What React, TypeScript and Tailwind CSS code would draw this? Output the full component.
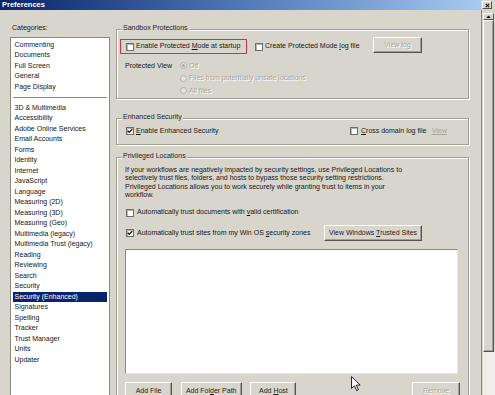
const categories = [
  "Commenting",
  "Documents",
  "Full Screen",
  "General",
  "Page Display",
  "-",
  "3D & Multimedia",
  "Accessibility",
  "Adobe Online Services",
  "Email Accounts",
  "Forms",
  "Identity",
  "Internet",
  "JavaScript",
  "Language",
  "Measuring (2D)",
  "Measuring (3D)",
  "Measuring (Geo)",
  "Multimedia (legacy)",
  "Multimedia Trust (legacy)",
  "Reading",
  "Reviewing",
  "Search",
  "Security",
  "Security (Enhanced)",
  "Signatures",
  "Spelling",
  "Tracker",
  "Trust Manager",
  "Units",
  "Updater",
];

const Check = ({ checked }: { checked?: boolean }) => (
  <span className="flex h-[8px] w-[8px] shrink-0 items-center justify-center border border-[#6f6d66] bg-white shadow-[inset_1px_1px_0_#b8b5ad]">
    {checked && (
      <svg viewBox="0 0 8 8" className="h-[6px] w-[6px]">
        <path d="M1 3.6 L3 5.8 L7 1.6" stroke="#111" strokeWidth="1.7" fill="none" />
      </svg>
    )}
  </span>
);

const Radio = ({ on }: { on?: boolean }) => (
  <span className="flex h-[7px] w-[7px] shrink-0 items-center justify-center rounded-full border border-[#b4b1a8] bg-[#e4e2dc]">
    {on && <span className="h-[3px] w-[3px] rounded-full bg-[#aeaba3]" />}
  </span>
);

const Btn = ({
  children,
  disabled,
  className,
}: {
  children: React.ReactNode;
  disabled?: boolean;
  className: string;
}) => (
  <div
    className={`flex shrink-0 items-center justify-center border border-t-white border-l-white border-r-[#55534e] border-b-[#55534e] bg-[#d8d5cd] shadow-[inset_-1px_-1px_0_#a19e96] ${
      disabled ? "text-[#aaa79f] [text-shadow:1px_1px_0_#fff]" : "text-[#1c1c1c]"
    } ${className}`}
  >
    <span className="whitespace-nowrap">{children}</span>
  </div>
);

const Legend = ({ children }: { children: React.ReactNode }) => (
  <legend className="ml-[2px] bg-[#d8d5cd] px-[1px] pb-[3px] leading-[9px] text-[#1c1c1c]">{children}</legend>
);

const fieldset =
  "w-[353px] border border-[#a19e95] px-[3px] shadow-[inset_1px_1px_0_#fff,1px_1px_0_#fff]";

export default function App() {
  return (
    <div className="relative h-[395px] w-[495px] overflow-hidden bg-[#d8d5cd] font-['Liberation_Sans',Arial,sans-serif] text-[7px] text-[#161616]">
      {/* title bar */}
      <div className="flex h-[10px]">
        <div className="flex flex-1 items-center bg-linear-to-r from-[#0a246a] via-[#4f78b8] to-[#a6caf0] pl-[2px] text-[7.5px] font-bold leading-none text-white">
          Preferences
        </div>
        <div className="w-[14px] pl-[1px] pt-[1px]">
          <div className="flex h-[8px] w-[10px] items-center justify-center border border-t-white border-l-white border-r-[#55534e] border-b-[#55534e] bg-[#d8d5cd]">
            <svg viewBox="0 0 6 6" className="h-[5px] w-[5px]">
              <path d="M1 1 L5 5 M5 1 L1 5" stroke="#111" strokeWidth="1.4" />
            </svg>
          </div>
        </div>
      </div>

      <div className="flex h-[385px]">
        {/* categories */}
        <div className="w-[114px] shrink-0 pl-[10px] pt-[13px]">
          <div className="mb-[4px] h-[10px] pl-[2px] leading-[10px]">Categories:</div>
          <div className="h-[360px] w-[100px] border border-[#8a877e] bg-white px-[2px] pt-[1.5px]">
            {categories.map((c, i) =>
              c === "-" ? (
                <div key={i} className="flex h-[10.5px] items-center">
                  <div className="h-px w-full bg-[#7c8596]" />
                </div>
              ) : (
                <div
                  key={i}
                  className={`h-[10.5px] whitespace-nowrap pl-[1.5px] leading-[10.5px] ${
                    c === "Security (Enhanced)" ? "bg-[#0a246a] text-white" : ""
                  }`}
                >
                  {c}
                </div>
              )
            )}
          </div>
        </div>

        {/* settings */}
        <div className="w-[367px] shrink-0 pl-[2px] pt-[13px]">
          <fieldset className={`${fieldset} pb-[1px]`}>
            <Legend>Sandbox Protections</Legend>
            <div className="mt-[2px] flex h-[17px] items-start">
              <div className="mt-[2px] flex h-[15px] w-[127px] items-center gap-[2px] border border-[#d9313b] pl-[5px]">
                <Check />
                <span className="whitespace-nowrap">
                  Enable Protected <u>M</u>ode at startup
                </span>
              </div>
              <div className="ml-[8px] mt-[2px] flex h-[15px] w-[118px] items-center gap-[2px]">
                <Check />
                <span className="whitespace-nowrap">
                  Create Protected Mode <u>l</u>og file
                </span>
              </div>
              <Btn disabled className="h-[16px] w-[49px]">
                View log
              </Btn>
            </div>
            <div className="mt-[5.5px] flex">
              <div className="w-[60px] pl-[5px] leading-[12.5px]">Protected View</div>
              <div className="flex flex-col text-[#aaa79f] [text-shadow:1px_1px_0_#fff]">
                <div className="flex h-[12.5px] items-center gap-[2px]">
                  <Radio on />
                  <span>Off</span>
                </div>
                <div className="flex h-[12.5px] items-center gap-[2px]">
                  <Radio />
                  <span className="whitespace-nowrap">Files from potentially unsafe locations</span>
                </div>
                <div className="flex h-[12.5px] items-center gap-[2px]">
                  <Radio />
                  <span>All files</span>
                </div>
              </div>
            </div>
          </fieldset>

          <fieldset className={`${fieldset} mt-[13px] pb-[7px]`}>
            <Legend>Enhanced Security</Legend>
            <div className="mt-[1px] flex h-[12px] items-center pl-[6px]">
              <div className="flex w-[224px] items-center gap-[2px]">
                <Check checked />
                <span>
                  <u>E</u>nable Enhanced Security
                </span>
              </div>
              <div className="flex w-[82px] items-center gap-[3px]">
                <Check />
                <span className="whitespace-nowrap">
                  <u>C</u>ross domain log file
                </span>
              </div>
              <span className="text-[#a8a59d] underline">View</span>
            </div>
          </fieldset>

          <fieldset className={`${fieldset} mt-[6px]`}>
            <Legend>Privileged Locations</Legend>
            <p className="mt-[3px] whitespace-nowrap pl-[5px] leading-[8.4px]">
              If your workflows are negatively impacted by security settings, use Privileged Locations to
              <br />
              selectively trust files, folders, and hosts to bypass those security setting restrictions.
              <br />
              Privileged Locations allows you to work securely while granting trust to items in your
              <br />
              workflow.
            </p>
            <div className="mt-[7px] flex h-[12px] items-center gap-[3px] pl-[6px]">
              <Check />
              <span>
                Automatically trust documents with <u>v</u>alid certification
              </span>
            </div>
            <div className="mt-[6.5px] flex h-[16px] items-center pl-[6px]">
              <div className="flex w-[198px] items-center gap-[3px]">
                <Check checked />
                <span className="whitespace-nowrap">
                  Automatically trust sites from my Win OS <u>s</u>ecurity zones
                </span>
              </div>
              <Btn className="h-[16px] w-[98px]">
                View Windows <u>T</u>rusted Sites
              </Btn>
            </div>
            <div className="ml-[5px] mt-[8px] h-[125px] w-[333px] border border-[#8a877e] border-r-[#e8e6e0] border-b-[#e8e6e0] bg-white" />
            <div className="mt-[7.7px] flex pl-[5px] pr-[5px]">
              <Btn className="h-[18px] w-[47px]">Add File</Btn>
              <Btn className="ml-[8.7px] h-[18px] w-[61px]">
                Add Fol<u>d</u>er Path
              </Btn>
              <Btn className="ml-[8.7px] h-[18px] w-[46px]">
                Add <u>H</u>ost
              </Btn>
              <Btn disabled className="ml-auto h-[18px] w-[48px]">
                Remove
              </Btn>
            </div>
          </fieldset>
        </div>

        {/* scrollbar */}
        <div className="flex w-[14px] flex-col border-l border-[#8b887f] pl-[1px] pt-[2.7px]">
          <div className="flex h-[7.5px] w-[11px] items-center justify-center border border-t-white border-l-white border-r-[#55534e] border-b-[#55534e] bg-[#d8d5cd]">
            <svg viewBox="0 0 6 4" className="h-[3px] w-[5px]">
              <path d="M0 4 L3 0.5 L6 4 Z" fill="#111" />
            </svg>
          </div>
          <div className="h-[332px] w-[11px] border border-t-white border-l-white border-r-[#55534e] border-b-[#55534e] bg-[#d8d5cd] shadow-[inset_-1px_-1px_0_#a19e96]" />
          <div className="flex-1 bg-[#efeee9]" />
        </div>
      </div>

      {/* mouse pointer */}
      <svg viewBox="0 0 10 16" className="absolute left-[351px] top-[376px] h-[16px] w-[10px]">
        <path d="M0.5 0.5 L0.5 12.5 L3.5 9.8 L5.6 14.6 L7.4 13.8 L5.3 9.1 L9.2 9.1 Z" fill="#fff" stroke="#111" strokeWidth="0.9" strokeLinejoin="round" />
      </svg>
    </div>
  );
}
